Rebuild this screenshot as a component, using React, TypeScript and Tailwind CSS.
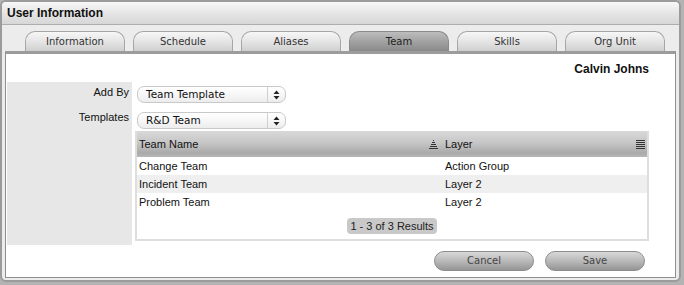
import React from "react";

function SelectArrows() {
  return (
    <svg width="7" height="10" viewBox="0 0 7 10">
      <polygon points="0.5,4 3.5,0.5 6.5,4" fill="#222" />
      <polygon points="0.5,6 3.5,9.5 6.5,6" fill="#222" />
    </svg>
  );
}

function SortIcon() {
  return (
    <svg width="9" height="9" viewBox="0 0 9 9">
      <rect x="4" y="0" width="1" height="1" fill="#333" />
      <rect x="3" y="2" width="3" height="1" fill="#333" />
      <rect x="2" y="4" width="5" height="1" fill="#333" />
      <rect x="1" y="6" width="7" height="1" fill="#333" />
      <rect x="0" y="8" width="9" height="1" fill="#333" />
    </svg>
  );
}

function MenuIcon() {
  return (
    <svg width="9" height="9" viewBox="0 0 9 9">
      <rect x="0" y="0" width="9" height="1" fill="#333" />
      <rect x="0" y="2" width="9" height="1" fill="#333" />
      <rect x="0" y="4" width="9" height="1" fill="#333" />
      <rect x="0" y="6" width="9" height="1" fill="#333" />
      <rect x="0" y="8" width="9" height="1" fill="#333" />
    </svg>
  );
}

function Select({ value }: { value: string }) {
  return (
    <div className="ml-[2px] w-[149px] h-[17px] flex items-stretch rounded-[7px] border border-[#c9c9c9] bg-[linear-gradient(to_bottom,#ffffff_0%,#f7f7f7_50%,#ececec_100%)]">
      <div className="flex-1 pl-[8px] font-['DejaVu_Sans',sans-serif] text-[10.5px] leading-[15px] text-[#111]">{value}</div>
      <div className="w-[18px] border-l border-[#d0d0d0] flex items-center justify-center">
        <SelectArrows />
      </div>
    </div>
  );
}

export default function App() {
  const tabs = ["Information", "Schedule", "Aliases", "Team", "Skills", "Org Unit"];
  const rows = [
    { name: "Change Team", layer: "Action Group" },
    { name: "Incident Team", layer: "Layer 2" },
    { name: "Problem Team", layer: "Layer 2" },
  ];
  return (
    <div className="w-[684px] h-[285px] bg-[#b3b3b3] font-['Liberation_Sans',Arial,sans-serif]">
      <div className="w-[681px] h-[282px] rounded-[6px] border-2 border-[#9b9b9b] bg-[#ececec] overflow-hidden flex flex-col">
        <div className="h-[23px] shrink-0 border-b border-[#adadad] bg-[linear-gradient(to_bottom,#f7f7f7_0%,#e6e6e6_50%,#d6d6d6_100%)] flex items-center pl-[5px] text-[12px] font-bold text-[#111]">
          User Information
        </div>
        <div className="h-[26px] shrink-0 flex items-end gap-[8px] pl-[23px] font-['DejaVu_Sans',sans-serif]">
          {tabs.map((t) =>
            t === "Team" ? (
              <div
                key={t}
                className="w-[100px] h-[20px] rounded-t-[10px] border border-b-0 border-[#8a8a8a] bg-[linear-gradient(to_bottom,#bdbdbd_0%,#9d9d9d_60%,#8a8a8a_100%)] text-center text-[10px] leading-[19px] text-[#222]"
              >
                {t}
              </div>
            ) : (
              <div
                key={t}
                className="w-[100px] h-[20px] rounded-t-[10px] border border-b-0 border-[#a6a6a6] bg-[linear-gradient(to_bottom,#f7f7f7_0%,#e3e3e3_55%,#cfcfcf_100%)] text-center text-[10px] leading-[19px] text-[#333]"
              >
                {t}
              </div>
            )
          )}
        </div>
        <div className="flex-1 mx-[3px] mb-[2px] bg-white border border-[#8f8f8f] border-t-[3px] border-t-[#9c9c9c] flex flex-col pl-[1px] pr-[26px]">
          <div className="h-[28px] pt-[2px] shrink-0 flex items-center justify-end text-[12px] font-bold text-[#111]">
            Calvin Johns
          </div>
          <div className="flex">
            <div className="w-[125px] bg-[#e7e7e7] flex flex-col items-end pr-[3px] text-[11px] leading-[14px] text-[#111]">
              <div className="pt-[3px]">Add By</div>
              <div className="mt-[11px]">Templates</div>
            </div>
            <div className="flex-1 ml-[3px] pt-[4px] pb-[4px] flex flex-col">
              <Select value="Team Template" />
              <div className="mt-[9px]">
                <Select value="R&D Team" />
              </div>
              <div className="mt-[2px] border-x-2 border-b-2 border-[#dedede] flex flex-col text-[11px] text-[#111]">
                <div className="h-[26px] flex bg-[linear-gradient(to_bottom,#d9d9d9_0%,#c6c6c6_45%,#aaaaaa_85%,#b8b8b8_100%)]">
                  <div className="w-[304px] flex items-center justify-between pl-[2px] pr-[3px]">
                    <span>Team Name</span>
                    <SortIcon />
                  </div>
                  <div className="flex-1 flex items-center justify-between pl-[4px] pr-[2px]">
                    <span>Layer</span>
                    <MenuIcon />
                  </div>
                </div>
                {rows.map((r, i) => (
                  <div key={r.name} className={"h-[18px] flex items-center " + (i === 1 ? "bg-[#efefef]" : "bg-white")}>
                    <div className="w-[304px] pl-[2px]">{r.name}</div>
                    <div className="flex-1 pl-[4px]">{r.layer}</div>
                  </div>
                ))}
                <div className="h-[28px] pt-[7px] flex justify-center">
                  <div className="h-[16px] px-[3px] rounded-[4px] bg-[#c9c9c9] text-[11px] leading-[16px] text-[#222]">
                    1 - 3 of 3 Results
                  </div>
                </div>
              </div>
            </div>
          </div>
          <div className="mt-[6px] flex justify-end gap-[11px] pr-[4px] font-['DejaVu_Sans',sans-serif]">
            <div className="w-[100px] h-[20px] rounded-full border border-[#8c8c8c] bg-[linear-gradient(to_bottom,#d8d8d8_0%,#b9b9b9_50%,#959595_100%)] text-center text-[10px] leading-[18px] text-[#444]">
              Cancel
            </div>
            <div className="w-[100px] h-[20px] rounded-full border border-[#8c8c8c] bg-[linear-gradient(to_bottom,#d8d8d8_0%,#b9b9b9_50%,#959595_100%)] text-center text-[10px] leading-[18px] text-[#444]">
              Save
            </div>
          </div>
        </div>
      </div>
    </div>
  );
}
